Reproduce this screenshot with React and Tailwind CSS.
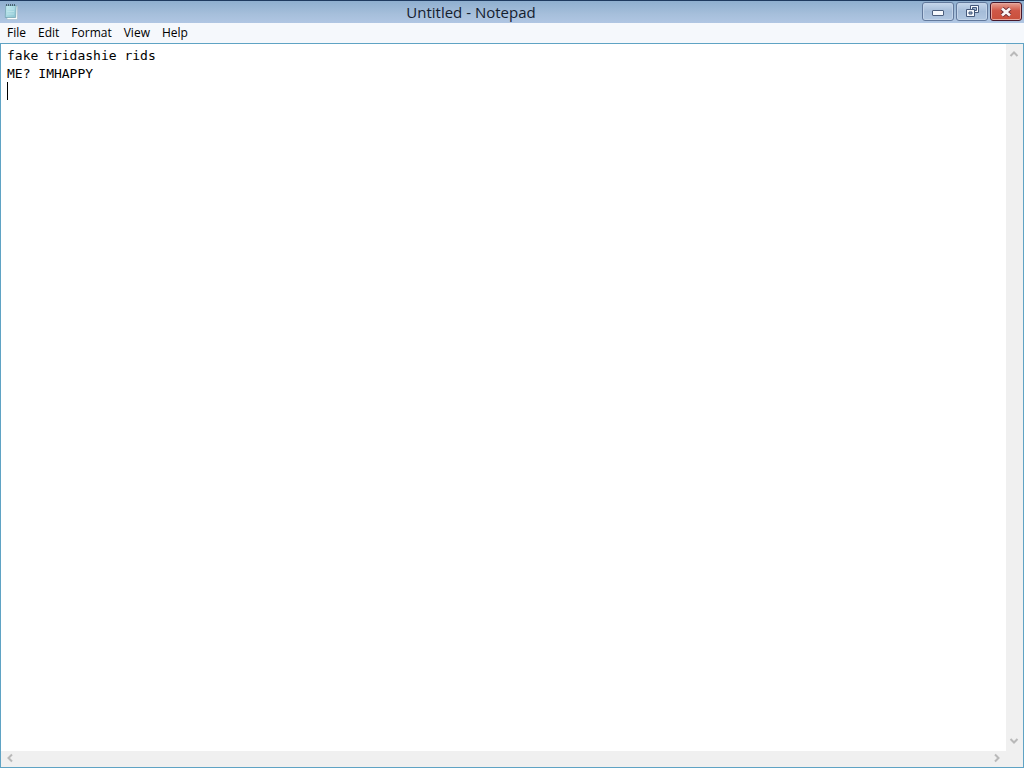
import { useState } from 'react';

const MENUS = ['File', 'Edit', 'Format', 'View', 'Help'];
const LINE_HEIGHT = 18;

function NotepadIcon() {
  return (
    <svg width="16" height="18" viewBox="0 0 16 18" aria-hidden="true">
      <defs>
        <linearGradient id="pad" x1="0" y1="0" x2="1" y2="1">
          <stop offset="0" stopColor="#c9eef3" />
          <stop offset="1" stopColor="#86c3d0" />
        </linearGradient>
      </defs>
      <path d="M3 3h10.5v13.5H3z" fill="#fafdfd" stroke="#a3b9c6" strokeWidth=".6" />
      <path d="M1.8 2.5h10.4l-.6 12H1.2z" fill="url(#pad)" stroke="#6f9dac" strokeWidth=".7" />
      <path d="M3.3 6h7M3.1 8.5h7M3 11h7" stroke="#c3e8ed" strokeWidth=".7" />
      <path d="M2.5 1v2M4.5 1v2M6.5 1v2M8.5 1v2M10.5 1v2" stroke="#3f5865" strokeWidth=".9" />
    </svg>
  );
}

function CaptionButton({ label, danger, children }) {
  return (
    <button
      type="button"
      aria-label={label}
      className={
        danger
          ? 'flex h-[19px] w-8 items-center justify-center rounded-[3px] border border-[#48182a] bg-linear-to-b from-[#e5a093] via-[#cf5747] via-45% to-[#c9503c] shadow-[inset_0_0_0_1px_#e6a79e]'
          : 'flex h-[19px] w-8 items-center justify-center rounded-[3px] border border-[#62799c] bg-linear-to-b from-[#c5d6eb] via-[#a5bcd8] via-50% to-[#b1c7e1] shadow-[inset_0_0_0_1px_#c3d4e9]'
      }
    >
      {children}
    </button>
  );
}

function ScrollArrow({ label, points }) {
  return (
    <button type="button" aria-label={label} className="flex size-4 shrink-0 items-center justify-center">
      <svg width="10" height="10" viewBox="0 0 10 10" fill="none" stroke="#b9b9b9" strokeWidth="2">
        <polyline points={points} />
      </svg>
    </button>
  );
}

export default function App() {
  const [text, setText] = useState('fake tridashie rids\nME? IMHAPPY\n');
  const [caretLine, setCaretLine] = useState(2);
  const [typing, setTyping] = useState(false);

  const handleChange = (e) => {
    setText(e.target.value);
    setCaretLine(e.target.value.split('\n').length - 1);
  };

  return (
    <div className="flex h-screen flex-col bg-[#f5f8fc] font-['Open_Sans','Noto_Sans',sans-serif] text-black">
      {/* Title bar */}
      <header className="flex h-[23px] shrink-0 items-center border-t border-[#1f3a5f] bg-linear-to-b from-[#8fafcf] via-[#a6bfdb] via-60% to-[#b0c6e3] pl-1">
        <NotepadIcon />
        <h1 className="flex-1 text-center text-[15px] leading-5 text-[#14202f]">Untitled - Notepad</h1>
        <div className="flex gap-0.5 pr-0.5 pb-px">
          <CaptionButton label="Minimize">
            <svg width="12" height="10" viewBox="0 0 12 10">
              <rect x=".5" y="3.5" width="11" height="5" rx=".5" fill="#f5f8fc" stroke="#4b5e7c" />
            </svg>
          </CaptionButton>
          <CaptionButton label="Restore">
            <svg width="13" height="13" viewBox="0 0 13 13">
              <path d="M4.5.5h8v7h-8z" fill="#f4f7fc" stroke="#44587a" />
              <path d="M6.5 2.5h4v3h-4z" fill="#9db4d2" stroke="#44587a" />
              <path d="M.5 4.5h8v7h-8z" fill="#f4f7fc" stroke="#44587a" />
              <path d="M3 7h3v2H3z" fill="#9db4d2" stroke="#44587a" />
            </svg>
          </CaptionButton>
          <CaptionButton label="Close" danger>
            <svg width="12" height="10" viewBox="0 0 12 10">
              <path d="M2 1.5l8 7M10 1.5l-8 7" stroke="#6b2a32" strokeWidth="4.4" />
              <path d="M2 1.5l8 7M10 1.5l-8 7" stroke="#fbf7f7" strokeWidth="2.8" />
            </svg>
          </CaptionButton>
        </div>
      </header>

      {/* Menu bar */}
      <nav className="flex h-5 shrink-0 items-center pl-px">
        {MENUS.map((item) => (
          <button key={item} type="button" className="px-1.5 text-xs leading-4 hover:bg-[#d5e6f7]">
            {item}
          </button>
        ))}
      </nav>

      {/* Editor */}
      <main className="flex min-h-0 flex-1 flex-col border border-[#5fa3c4] bg-white">
        <div className="flex min-h-0 flex-1">
          <div className="relative flex min-w-0 flex-1">
            <textarea
              aria-label="Text editor"
              wrap="off"
              spellCheck={false}
              value={text}
              onChange={handleChange}
              onFocus={() => setTyping(true)}
              onBlur={() => setTyping(false)}
              className="flex-1 resize-none overflow-hidden px-1.5 py-[3px] font-['DejaVu_Sans_Mono',monospace] text-[13px] leading-[18px] outline-none"
            />
            {!typing && (
              <span
                className="pointer-events-none absolute left-1.5 h-[18px] w-px bg-black"
                style={{ top: 2 + caretLine * LINE_HEIGHT }}
              />
            )}
          </div>
          <div className="flex w-[17px] shrink-0 flex-col justify-between bg-[#f0f0f0] py-0.5">
            <ScrollArrow label="Scroll up" points="1.5,7 5,3.5 8.5,7" />
            <ScrollArrow label="Scroll down" points="1.5,3 5,6.5 8.5,3" />
          </div>
        </div>
        <div className="flex h-4 shrink-0 items-end justify-between bg-[#f0f0f0] pr-[18px] pb-px pl-px">
          <ScrollArrow label="Scroll left" points="7,1.5 3.5,5 7,8.5" />
          <ScrollArrow label="Scroll right" points="3,1.5 6.5,5 3,8.5" />
        </div>
      </main>
    </div>
  );
}
